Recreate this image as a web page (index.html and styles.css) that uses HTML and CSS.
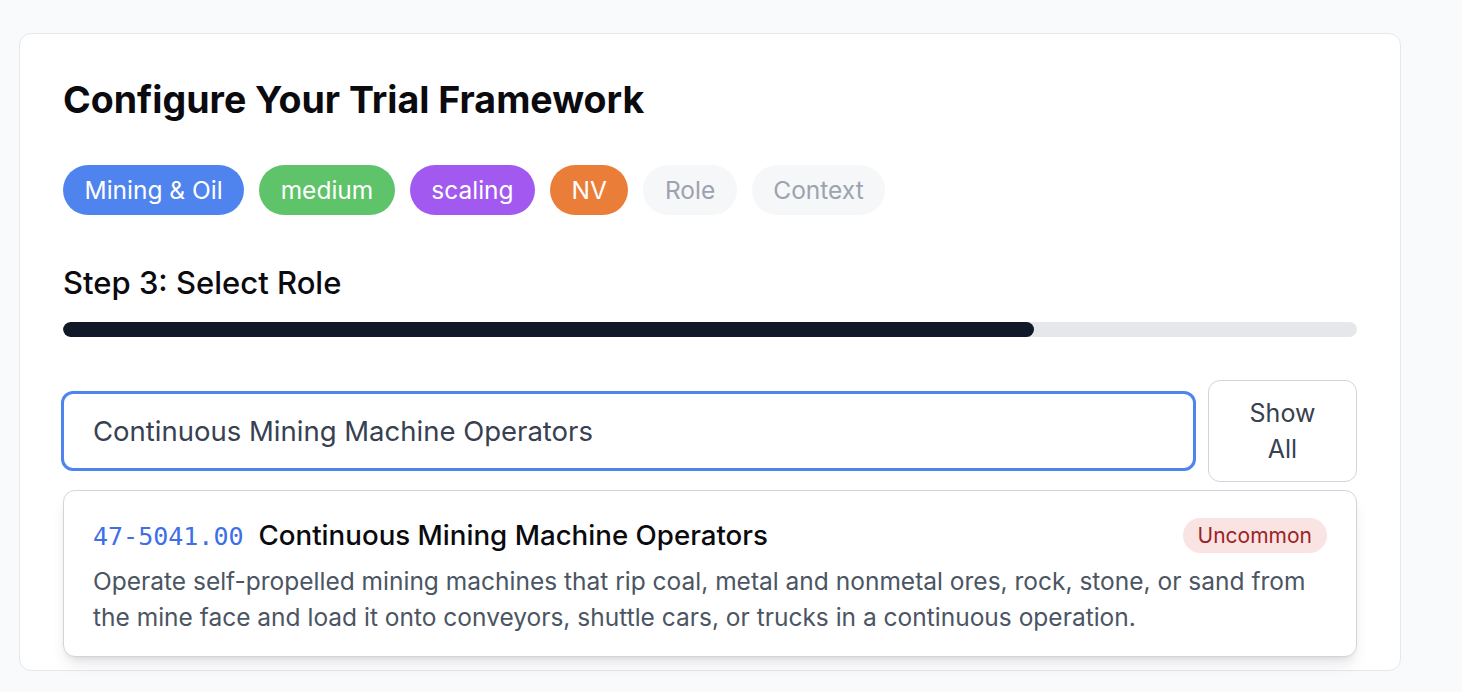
FILE: index.html
```html
<!DOCTYPE html>
<html lang="en">
<head>
<meta charset="utf-8">
<title>Configure Your Trial Framework</title>
<link rel="stylesheet" href="styles.css">
</head>
<body>
<main class="page">
  <section class="card">
    <h1 class="title">Configure Your Trial Framework</h1>
    <div class="pills">
      <span class="pill pill-blue">Mining &amp; Oil</span>
      <span class="pill pill-green">medium</span>
      <span class="pill pill-purple">scaling</span>
      <span class="pill pill-orange">NV</span>
      <span class="pill pill-empty">Role</span>
      <span class="pill pill-empty">Context</span>
    </div>
    <h2 class="step">Step 3: Select Role</h2>
    <div class="progress"><div class="progress-fill" style="width:75%"></div></div>
    <div class="search-row">
      <div class="search-input">Continuous Mining Machine Operators</div>
      <button class="show-all">Show<br>All</button>
      <div class="dropdown">
        <div class="result-head">
          <div class="result-name">
            <span class="code">47-5041.00</span>
            <span class="role">Continuous Mining Machine Operators</span>
          </div>
          <span class="badge">Uncommon</span>
        </div>
        <p class="desc">Operate self-propelled mining machines that rip coal, metal and nonmetal ores, rock, stone, or sand from the mine face and load it onto conveyors, shuttle cars, or trucks in a continuous operation.</p>
      </div>
    </div>
  </section>
</main>
</body>
</html>
```
FILE: styles.css
```css
* { box-sizing: border-box; }
html, body { margin: 0; padding: 0; }
body {
  background: #f9fafb;
  font-family: Inter, "Noto Sans", "Liberation Sans", sans-serif;
  color: #111827;
  width: 1462px;
  height: 692px;
  overflow: hidden;
}
.page {
  padding: 33px 0 0 19px;
}
.card {
  width: 1382px;
  min-height: 638px;
  background: #ffffff;
  border: 1px solid #e5e7eb;
  border-radius: 12px;
  padding: 43px 43px 40px 43px;
}
.title {
  margin: 0 0 43px 0;
  font-size: 37.5px;
  line-height: 45px;
  font-weight: 700;
  color: #0b0b0f;
}
.pills {
  display: flex;
  gap: 15px;
  margin-bottom: 50px;
}
.pill {
  display: inline-block;
  padding: 10px 21.5px;
  font-size: 24.5px;
  line-height: 30px;
  border-radius: 9999px;
  color: #ffffff;
}
.pill-blue { background: #4f84ef; }
.pill-green { background: #5fc36a; }
.pill-purple { background: #a259ef; }
.pill-orange { background: #ea7e39; }
.pill-empty { background: #f6f7f9; color: #9ca3af; }
.step {
  margin: 0 0 22px 0;
  font-size: 31px;
  line-height: 35px;
  font-weight: 500;
  color: #0b0b0f;
}
.progress {
  height: 15px;
  background: #e5e7eb;
  border-radius: 9999px;
  overflow: hidden;
  margin-bottom: 43px;
}
.progress-fill {
  height: 100%;
  background: #111827;
  border-radius: 9999px;
}
.search-row {
  position: relative;
  display: flex;
  align-items: center;
  gap: 12px;
}
.search-input {
  flex: 1;
  height: 80px;
  margin-left: -2px;
  border: 3px solid #4f84ef;
  border-radius: 12px;
  padding: 0 29px;
  display: flex;
  align-items: center;
  font-size: 27.5px;
  color: #374151;
}
.show-all {
  width: 149px;
  height: 102px;
  background: #ffffff;
  border: 1px solid #d1d5db;
  border-radius: 12px;
  font-family: inherit;
  font-size: 25px;
  line-height: 36px;
  color: #374151;
  padding: 0;
}
.dropdown {
  position: absolute;
  top: calc(100% + 8px);
  left: 0;
  right: 0;
  background: #ffffff;
  border: 1px solid #d1d5db;
  border-radius: 12px;
  box-shadow: 0 10px 15px -3px rgba(0,0,0,0.1), 0 4px 6px -4px rgba(0,0,0,0.1);
  padding: 27px 29px 21px 29px;
}
.result-head {
  display: flex;
  justify-content: space-between;
  align-items: center;
}
.result-name {
  display: flex;
  align-items: baseline;
  gap: 15px;
}
.code {
  font-family: "DejaVu Sans Mono", "Liberation Mono", monospace;
  font-size: 25px;
  color: #3d6fe6;
}
.role {
  font-size: 27.7px;
  line-height: 35px;
  font-weight: 500;
  color: #0b0b0f;
}
.badge {
  background: #fae3e3;
  color: #9b2424;
  font-size: 21px;
  line-height: 25px;
  padding: 5px 15px;
  border-radius: 9999px;
}
.desc {
  margin: 10px 0 0 0;
  font-size: 24.5px;
  line-height: 36px;
  color: #4b5563;
}
```
